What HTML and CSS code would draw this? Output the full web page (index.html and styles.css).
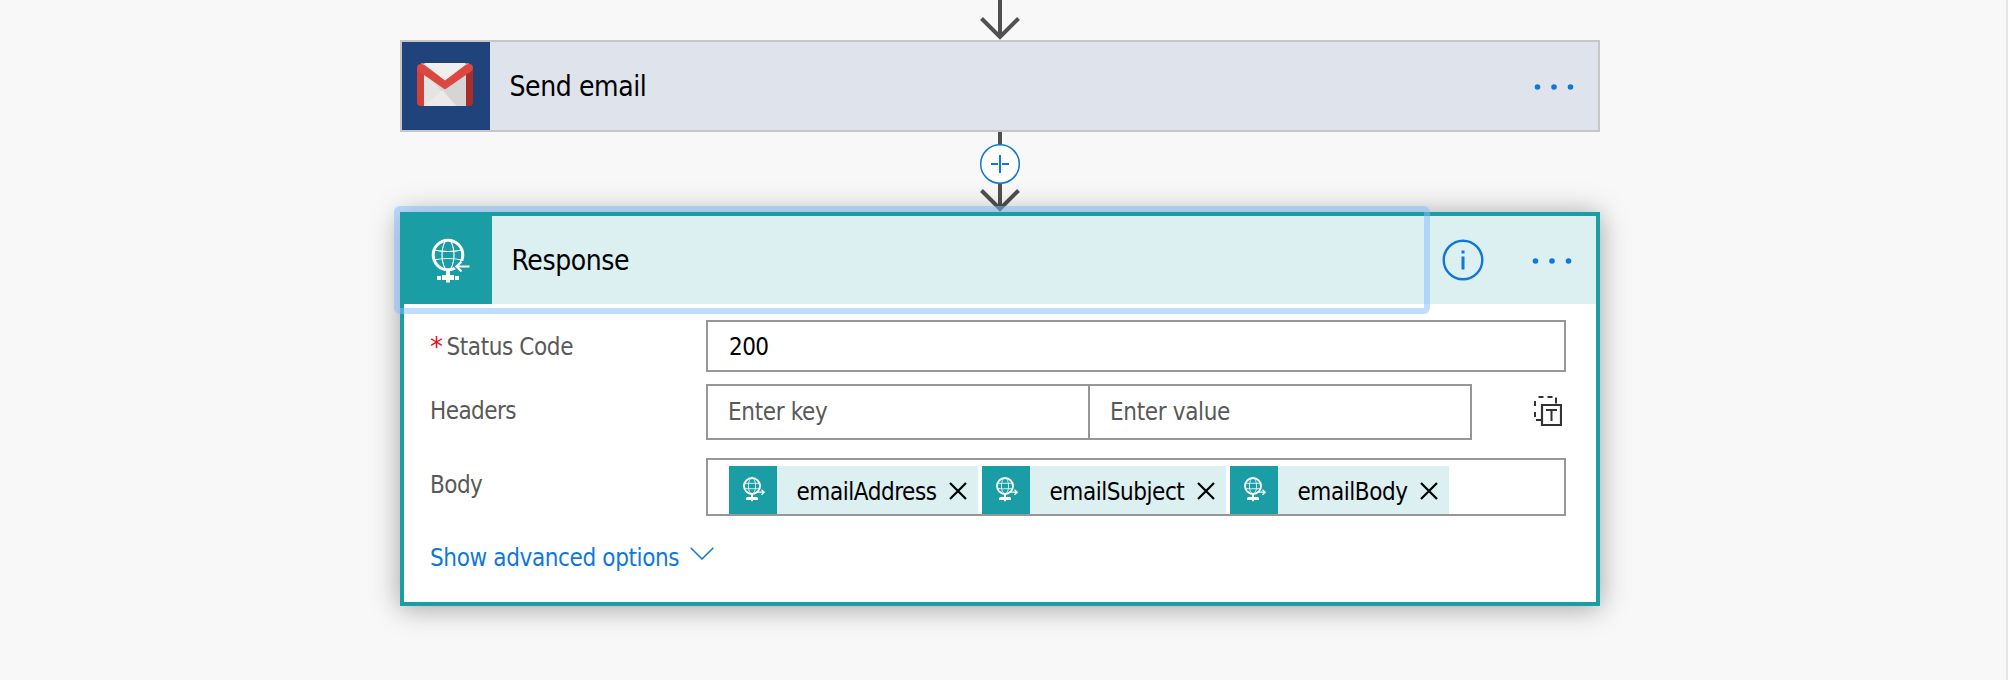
FILE: index.html
```html
<!DOCTYPE html>
<html lang="en">
<head>
<meta charset="utf-8">
<title>Workflow designer</title>
<link rel="stylesheet" href="styles.css">
</head>
<body>
<svg class="defs" width="0" height="0">
  <symbol id="globe" viewBox="0 0 40 46">
    <g fill="none" stroke="#fff">
      <circle cx="17" cy="17" r="14.800" stroke-width="3"/>
      <ellipse cx="17" cy="17" rx="6" ry="15" stroke-width="1.200"/>
      <path d="M3 12q14 3 28 0M3 22q14-3 28 0" stroke-width="1.200"/>
    </g>
    <path fill="#fff" d="M15 31h4v6h4v5h-4v2.500h-4V42h-4v-5h4zM6 38h4v4H6zM24 38h4v4h-4z"/>
  </symbol>
  <symbol id="dots" viewBox="0 0 40 6">
    <g fill="#1078d8"><circle cx="3.500" cy="3" r="2.800"/><circle cx="20" cy="3" r="2.800"/><circle cx="36.500" cy="3" r="2.800"/></g>
  </symbol>
  <symbol id="globe-out" viewBox="0 0 24 26">
    <g fill="none" stroke="#fff">
      <circle cx="10" cy="10" r="8" stroke-width="1.900"/>
      <ellipse cx="10" cy="10" rx="3.600" ry="8" stroke-width=".8"/>
      <path d="M2.500 7.300h15M2.500 12.700h15" stroke-width=".8"/>
      <path d="M15 16.200h7M19.500 13.700l2.700 2.500-2.700 2.500" stroke-width="1.300"/>
    </g>
    <path fill="#fff" d="M9 18h2v3h4v3h-4v1.200H9V24H5v-3h4zM4 21.500h1.500V24H4zM14.500 21.500H16V24h-1.500z"/>
  </symbol>
  <symbol id="close" viewBox="0 0 18 18">
    <path d="M1 1l16 16M17 1L1 17" fill="none" stroke="#000" stroke-width="2.200"/>
  </symbol>
</svg>
<main class="canvas">
  <div class="flow">
    <svg class="connector top" width="44" height="40" viewBox="0 0 44 40">
      <path d="M22 0v37M3.500 18.500L22 37l18.500-18.500" fill="none" stroke="#505050" stroke-width="4"/>
    </svg>
    <section class="card send">
      <div class="tile gmail">
        <svg width="56" height="44" viewBox="0 0 56 44">
          <path d="M4 .5h48v42.500H7z" fill="#e4e4e4"/>
          <path d="M7 0h42L28 18z" fill="#efefef"/>
          <path d="M7 10l33 33h9V10L28 27z" fill="#d5d5d5"/>
          <path d="M7 43l19-16 12 16z" fill="#eaeaea"/>
          <path d="M0 4l7 6v33H4q-4 0-4-4z" fill="#d04239"/>
          <path d="M56 4l-7 6v33h3q4 0 4-4z" fill="#ab2d27"/>
          <path d="M4 1q2 0 3.500 1L28 17.500 48.500 2Q50 1 52 1q4 0 4 4 0 2-2 3.500L28 26.500 2 8.500Q0 7 0 5q0-4 4-4z" fill="#dc473f"/>
        </svg>
      </div>
      <h2 class="title t-send">Send email</h2>
      <svg class="dots" width="40" height="6"><use href="#dots"/></svg>
    </section>
    <svg class="connector mid" width="44" height="80" viewBox="0 0 44 80">
      <path d="M22 0v77M3.500 58.500L22 77l18.500-18.500" fill="none" stroke="#505050" stroke-width="4"/>
      <circle cx="22" cy="32" r="19.300" fill="#fff" stroke="#1078d8" stroke-width="1.500"/>
      <path d="M22 23v18M13 32h7M24 32h7" fill="none" stroke="#1078d8" stroke-width="2"/>
    </svg>
    <section class="card response">
      <header class="head">
        <div class="tile">
          <svg class="globe" width="40" height="46">
            <use href="#globe"/>
            <path d="M22.500 28.500l5-5.500h8v11h-8z" fill="#1a9da5"/>
            <path d="M38.500 28.500H25.500M30.500 23.500l-5 5 5 5" fill="none" stroke="#fff" stroke-width="2.200"/>
          </svg>
        </div>
        <h2 class="title t-response">Response</h2>
        <svg class="info" width="42" height="42" viewBox="0 0 42 42">
          <circle cx="21" cy="21" r="19.300" fill="none" stroke="#1078d8" stroke-width="2.400"/>
          <path d="M19.500 11.500h3v3h-3zM19.500 17.500h3v13h-3z" fill="#1078d8"/>
        </svg>
        <svg class="dots" width="40" height="6"><use href="#dots"/></svg>
      </header>
      <div class="focus-ring"></div>
      <div class="form">
        <div class="row row-status">
          <label class="label"><span class="req">*</span><span class="t-status">Status Code</span></label>
          <div class="field"><span class="t-200">200</span></div>
        </div>
        <div class="row row-headers">
          <label class="label"><span class="t-headers">Headers</span></label>
          <div class="pair">
            <div class="field hint"><span class="t-key">Enter key</span></div>
            <div class="field hint"><span class="t-value">Enter value</span></div>
          </div>
          <svg class="switch" width="28" height="32" viewBox="0 0 28 32">
            <path d="M4.500 2h5M13.500 2h5M22 2.500v6M1 6v5M1 17v5M2 25h5" fill="none" stroke="#333" stroke-width="2"/>
            <path d="M8 10h19v20H8z" fill="#fff" stroke="#333" stroke-width="2.200"/>
            <path d="M12 15h11M17.500 15v11" fill="none" stroke="#333" stroke-width="2"/>
          </svg>
        </div>
        <div class="row row-body">
          <label class="label"><span class="t-body">Body</span></label>
          <div class="field tokens">
            <div class="token tk1"><div class="token-icon"><svg width="24" height="26"><use href="#globe-out"/></svg></div><span class="t-addr">emailAddress</span><svg class="close" width="18" height="18"><use href="#close"/></svg></div>
            <div class="token tk2"><div class="token-icon"><svg width="24" height="26"><use href="#globe-out"/></svg></div><span class="t-subj">emailSubject</span><svg class="close" width="18" height="18"><use href="#close"/></svg></div>
            <div class="token tk3"><div class="token-icon"><svg width="24" height="26"><use href="#globe-out"/></svg></div><span class="t-ebody">emailBody</span><svg class="close" width="18" height="18"><use href="#close"/></svg></div>
          </div>
        </div>
        <div class="advanced"><span class="t-adv">Show advanced options</span>
          <svg width="24" height="13" viewBox="0 0 24 13"><path d="M.7.700L12 12 23.300.700" fill="none" stroke="#1078d8" stroke-width="1.500"/></svg>
        </div>
      </div>
    </section>
  </div>
</main>
</body>
</html>
```
FILE: styles.css
```css
* { box-sizing: border-box; }
body {
  margin: 0;
  background: #f8f8f8;
  font-family: "DejaVu Sans Condensed", "DejaVu Sans", sans-serif;
  font-stretch: condensed;
  font-size: 24px;
  line-height: 30px;
  color: #000;
}
svg { display: block; flex: none; }
.defs { position: absolute; }
.canvas {
  height: 680px;
  overflow: hidden;
  border-right: 2px solid #e6e6e6;
}
.flow {
  width: 1200px;
  margin-left: 400px;
  display: flex;
  flex-direction: column;
  align-items: center;
}
.card { width: 1200px; display: flex; }
.send {
  height: 92px;
  border: 2px solid #c6c6c6;
  background: #dfe3ec;
  align-items: center;
  padding-right: 24px;
}
.send .dots { margin-top: 2px; }
.tile {
  width: 88px;
  height: 88px;
  display: flex;
  align-items: center;
  justify-content: center;
  background: #1a9da5;
}
.gmail { background: #21437b; padding: 0 2px 3px 0; }
.title {
  margin: 0;
  padding: 2px 0 0 19.500px;
  flex: 1;
  font-size: 28px;
  font-weight: 400;
  line-height: 36px;
  white-space: nowrap;
}
.response {
  position: relative;
  height: 394px;
  flex-direction: column;
  border: 4px solid #1a9da5;
  background: #fff;
  box-shadow: 0 2px 26px rgba(0, 0, 0, .36);
}
.head {
  height: 88px;
  display: flex;
  align-items: center;
  background: #dceff1;
  padding-right: 24px;
}
.globe { margin: 1px 0 0 6px; }
.info { margin-right: 48px; }
.head .dots { margin: 2px 0 0; }
.focus-ring {
  position: absolute;
  left: -10px;
  top: -10px;
  width: 1036px;
  height: 108px;
  border: 6px solid rgba(128, 189, 255, .5);
  border-radius: 6px;
  pointer-events: none;
}
.form {
  padding: 16px 30px 0 26px;
  display: flex;
  flex-direction: column;
}
.row { display: flex; align-items: center; }
.label { width: 276px; color: #595959; white-space: nowrap; display: flex; }
.req {
  width: 16.500px;
  color: #e81123;
  font-family: "DejaVu Sans", sans-serif;
  font-stretch: normal;
  font-size: 26px;
}
.field {
  flex: 1;
  height: 100%;
  border: 2px solid #979797;
  display: flex;
  align-items: center;
  padding-left: 20px;
  white-space: nowrap;
}
.row-status { height: 52px; }
.row-status .label, .row-status .field { padding-top: 2px; }
.row-headers { height: 56px; margin-top: 12px; }
.row-headers .label { padding-bottom: 3px; }
.row-body { height: 58px; margin-top: 18px; }
.row-body .label { padding-bottom: 5px; }
.pair { width: 766px; height: 100%; display: flex; }
.pair .field + .field { margin-left: -2px; }
.hint { color: #595959; }
.switch { margin: 0 0 2px 62px; }
.tokens { padding: 6px 0 0 21px; gap: 4px; }
.token {
  height: 48px;
  display: flex;
  align-items: center;
  background: #dceff1;
}
.tk1 { width: 249px; }
.tk2 { width: 244px; }
.tk3 { width: 219px; }
.token-icon {
  width: 48px;
  height: 48px;
  margin-right: 19.500px;
  padding: 0 0 2px 2px;
  background: #1a9da5;
  display: flex;
  align-items: center;
  justify-content: center;
}
.token span { padding-top: 3px; }
.close { margin: 2px 11px 0 auto; }
.advanced {
  margin-top: 27px;
  display: flex;
  gap: 11px;
  color: #1078d8;
  white-space: nowrap;
}
.advanced svg { margin-top: 4px; }
.t-send, .t-response { letter-spacing: -.4px; }
.t-status { letter-spacing: -.4px; }
.t-200 { letter-spacing: -.6px; padding-left: 1px; }
.t-headers, .t-body { letter-spacing: -.55px; }
.t-key, .t-value { letter-spacing: -.35px; }
.t-addr, .t-subj, .t-ebody { letter-spacing: -.45px; }
.t-adv { letter-spacing: -.37px; }
```
